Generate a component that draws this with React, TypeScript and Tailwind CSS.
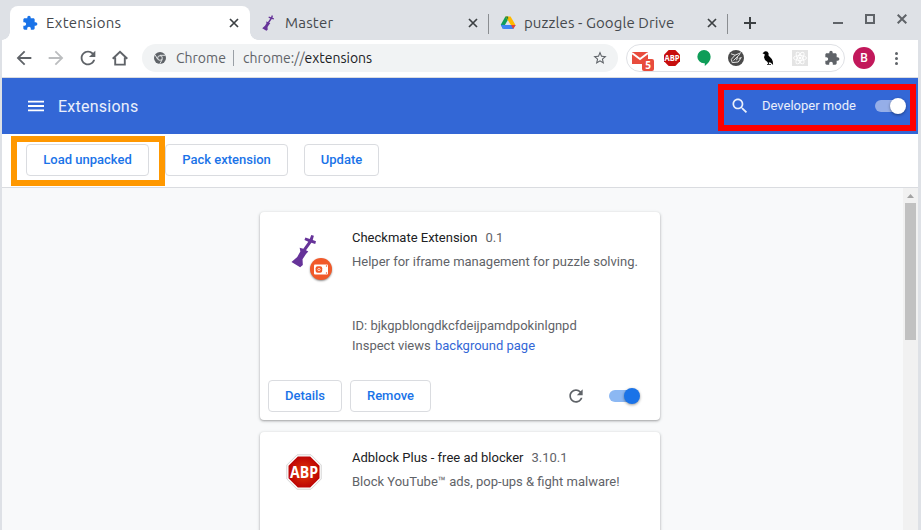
import type { ReactNode } from "react";

const UI = "font-['Ubuntu','Noto_Sans',sans-serif]";

const PATHS = {
  back: "M20 11H7.83l5.59-5.59L12 4l-8 8 8 8 1.41-1.41L7.83 13H20v-2z",
  refresh:
    "M17.65 6.35C16.2 4.9 14.21 4 12 4c-4.42 0-7.99 3.58-7.99 8s3.57 8 7.99 8c3.73 0 6.84-2.55 7.73-6h-2.08c-.82 2.33-3.04 4-5.65 4-3.31 0-6-2.69-6-6s2.69-6 6-6c1.66 0 3.14.69 4.22 1.78L13 11h7V4l-2.35 2.35z",
  puzzle:
    "M20.5 11H19V7c0-1.1-.9-2-2-2h-4V3.5C13 2.12 11.88 1 10.5 1S8 2.12 8 3.5V5H4c-1.1 0-1.99.9-1.99 2v3.8H3.5c1.49 0 2.7 1.21 2.7 2.7s-1.21 2.7-2.7 2.7H2V20c0 1.1.9 2 2 2h3.8v-1.5c0-1.49 1.21-2.7 2.7-2.7 1.49 0 2.7 1.21 2.7 2.7V22H17c1.1 0 2-.9 2-2v-4h1.5c1.38 0 2.5-1.12 2.5-2.5S21.88 11 20.5 11z",
  search:
    "M15.5 14h-.79l-.28-.27C15.41 12.59 16 11.11 16 9.5 16 5.91 13.09 3 9.5 3S3 5.91 3 9.5 5.91 16 9.5 16c1.61 0 3.09-.59 4.23-1.57l.27.28v.79l5 4.99L20.49 19l-4.99-5zm-6 0C7.01 14 5 11.99 5 9.5S7.01 5 9.5 5 14 7.01 14 9.5 11.99 14 9.5 14z",
  star: "M22 9.24l-7.19-.62L12 2 9.19 8.63 2 9.24l5.46 4.73L5.82 21 12 17.27 18.18 21l-1.63-7.03L22 9.24zM12 15.4l-3.76 2.27 1-4.28-3.32-2.88 4.38-.38L12 6.1l1.71 4.04 4.38.38-3.32 2.88 1 4.28L12 15.4z",
  menu: "M3 18h18v-2H3v2zm0-5h18v-2H3v2zm0-7v2h18V6H3z",
};

function Icon({ d, className }: { d: string; className: string }) {
  return (
    <svg viewBox="0 0 24 24" fill="currentColor" className={`shrink-0 ${className}`}>
      <path d={d} />
    </svg>
  );
}

function Cross({ className = "" }: { className?: string }) {
  return (
    <svg viewBox="0 0 8 8" className={`size-2 shrink-0 overflow-visible ${className}`} fill="none" stroke="currentColor" strokeWidth="1.7">
      <path d="M0 0l8 8M8 0L0 8" />
    </svg>
  );
}

function KingPiece({ className }: { className: string }) {
  return (
    <svg viewBox="0 0 26 34" className={`shrink-0 ${className}`} fill="#663399">
      <path d="M.5 28.400L6.500 23.200 9.700 17.500 9 13.500 12.800 14.600 18 7.300 14 5.600 15 3 19.500 4.600 21.100.3 23.800 1.200 22.600 5.600 26 6.900 25.200 9.600 21.200 8.400 15.600 16.200 18 17.500 15.600 20.200 12 25.600 12.300 31.500 9.500 34z" />
    </svg>
  );
}

function DriveLogo() {
  return (
    <svg viewBox="0 0 16 16" className="size-4 shrink-0">
      <path d="M5.4 1.5L.8 9.7l2.1 3.8L8.1 4.5z" fill="#0f9d58" />
      <path d="M5.4 1.5h5.2l5 8.7h-4.500z" fill="#ffba00" />
      <path d="M4.8 10.1h10.8l-2.4 4H2.8z" fill="#3c83f6" />
      <path d="M11.1 10.1h4.500l-2.400 4z" fill="#ea4335" />
      <path d="M.8 9.7l2 4.4 2.4-4z" fill="#3c83f6" />
      <path d="M5.4 1.5h2.700v3z" fill="#188038" />
    </svg>
  );
}

function ChromeMark() {
  return (
    <svg viewBox="0 0 12 12" className="size-3 shrink-0">
      <circle cx="6" cy="6" r="6" fill="#5f6368" />
      <circle cx="6" cy="6" r="2.3" fill="#5f6368" stroke="#f1f3f4" strokeWidth="0.9" />
      <path d="M6 3.3h5.4M3.7 7.3L1.1 2.9M8.3 7.4L5.8 11.8" stroke="#f1f3f4" strokeWidth="0.9" />
    </svg>
  );
}

function Tab({ icon, title, spacing, active, className }: { icon: ReactNode; title: string; spacing: string; active?: boolean; className: string }) {
  return (
    <div className={`relative flex h-[34px] shrink-0 items-center ${active ? "rounded-t-lg bg-white" : ""} ${className}`}>
      {active && (
        <>
          <i className="absolute bottom-0 -left-2 size-2 bg-[radial-gradient(circle_at_0_0,transparent_7.5px,#fff_8px)]" />
          <i className="absolute bottom-0 -right-2 size-2 bg-[radial-gradient(circle_at_100%_0,transparent_7.5px,#fff_8px)]" />
        </>
      )}
      <span className="flex w-[24px] shrink-0">{icon}</span>
      <span className={`text-[15px] leading-5 whitespace-nowrap text-[#45494d] ${spacing}`}>{title}</span>
      <Cross className="ml-auto text-[#3c4043]" />
    </div>
  );
}

function Button({ children, className }: { children: ReactNode; className: string }) {
  return (
    <button className={`h-8 shrink-0 rounded-[4px] border border-[#dadce0] bg-white pb-[2px] text-[13px] leading-[15px] font-medium whitespace-nowrap text-[#1a73e8] ${className}`}>
      {children}
    </button>
  );
}

function Toggle({ track, knob }: { track: string; knob: string }) {
  return (
    <span className="flex h-4 w-[31px] shrink-0 items-center">
      <span className={`flex h-3 w-7 items-center rounded-full ${track}`}>
        <span className={`ml-[15px] size-4 shrink-0 rounded-full shadow-[0_1px_3px_rgba(0,0,0,0.4)] ${knob}`} />
      </span>
    </span>
  );
}

function TabStrip() {
  return (
    <div className={`flex h-10 pt-1.5 pl-2 ${UI}`}>
      <Tab active className="w-[240px] pr-3 pl-3" spacing="tracking-[0.250px]" title="Extensions" icon={<Icon d={PATHS.puzzle} className="size-4 text-[#1a73e8]" />} />
      <Tab className="w-[238px] pr-[11px] pl-[11px]" spacing="tracking-[0.200px]" title="Master" icon={<KingPiece className="ml-[1px] h-4 w-3" />} />
      <i className="mt-2 h-5 w-px bg-[#8a8d91]" />
      <Tab className="w-[238px] pr-[11px] pl-[11px]" spacing="tracking-[0.090px]" title="puzzles - Google Drive" icon={<DriveLogo />} />
      <i className="mt-2 h-5 w-px bg-[#8a8d91]" />
      <svg viewBox="0 0 12 12" className="mt-[11px] ml-4 size-3 shrink-0" stroke="#3c4043" strokeWidth="2">
        <path d="M6 0v12M0 6h12" />
      </svg>
      <div className="mt-2 ml-auto flex h-[10px] w-[85px] shrink-0 text-[#5f6368]">
        <i className="mt-2 h-0.5 w-[10px] bg-[#5f6368]" />
        <i className="ml-[22px] size-[10px] border-2 border-[#5f6368]" />
        <svg viewBox="0 0 10 10" className="ml-[22px] size-[10px]" stroke="currentColor" strokeWidth="2">
          <path d="M.7.7l8.6 8.6M9.3.7L.7 9.3" />
        </svg>
      </div>
    </div>
  );
}

function ExtensionIcons() {
  return (
    <div className="ml-2 flex h-7 w-[219px] shrink-0 items-center gap-4 rounded-full border border-[#dfe1e5] pl-[5px]">
      <span className="relative size-4 shrink-0">
        <svg viewBox="0 0 16 16" className="size-4">
          <path d="M0 2h16v12H0z" fill="#e84c3d" />
          <path d="M0 3l8 6 8-6" stroke="#fff" strokeWidth="1.8" fill="none" />
        </svg>
        <b className="absolute top-[9px] left-[10px] flex h-3 w-3 items-center justify-center rounded-[2px] bg-[#e84c3d] font-['Open_Sans',sans-serif] text-[10px] leading-none text-white">5</b>
      </span>
      <svg viewBox="0 0 16 16" className="size-4 shrink-0">
        <path d="M4.7 0h6.6L16 4.7v6.6L11.3 16H4.7L0 11.3V4.7z" fill="#c70d0d" />
        <text x="8" y="10.800" textAnchor="middle" textLength="15" lengthAdjust="spacingAndGlyphs" fontSize="8" fontWeight="700" fontFamily="Open Sans" fill="#fff">ABP</text>
      </svg>
      <svg viewBox="0 0 16 16" className="size-4 shrink-0" fill="#0f9d58">
        <path d="M8 0a6.600 6.600 0 0 1 6.600 6.800c0 3.800-2.600 7-5.800 9.200V13.300H8A6.650 6.650 0 0 1 8 0z" />
      </svg>
      <svg viewBox="0 0 16 16" className="size-4 shrink-0" fill="none" stroke="#e4e4e4">
        <circle cx="8" cy="8" r="8" fill="#4a4a4a" stroke="none" />
        <path d="M3 3.800L7 5.200 3.300 9.300 4.200 12.600 10.200 12 13.300 7.500 10.800 8.500M7 5.200L13 2.700M5.500 10.500L12 4.200M8.600 10.200L9.500 6.800" strokeWidth="1" />
      </svg>
      <svg viewBox="0 0 16 16" className="size-4 shrink-0" fill="#050505">
        <path d="M2.500 3.200L5 1.200 7.200 1.500 8.600 3.200 8.500 5.500 11.800 9l1 2.600.3 3.300L10.800 12.700 8.800 12.300 9 14h2v.8H7v-.8h1.200L7.500 12 5 10 4 7.200 4.900 4.400z" />
      </svg>
      <svg viewBox="0 0 16 16" className="size-4 shrink-0" fill="none" stroke="#fff" strokeWidth="0.9">
        <path d="M0 0h16v16H0z" fill="#e4e4e4" stroke="none" />
        <ellipse cx="8" cy="8" rx="6.500" ry="2.500" />
        <ellipse cx="8" cy="8" rx="6.500" ry="2.500" transform="rotate(60 8 8)" />
        <ellipse cx="8" cy="8" rx="6.500" ry="2.500" transform="rotate(120 8 8)" />
        <circle cx="8" cy="8" r="1" fill="#fff" />
      </svg>
      <Icon d={PATHS.puzzle} className="size-4 text-[#5f6368]" />
    </div>
  );
}

function AddressBar() {
  return (
    <div className="flex h-[37px] items-center bg-white pb-px pl-1.5 text-[#5f6368]">
      <span className="flex w-8 justify-center"><Icon d={PATHS.back} className="size-[22px]" /></span>
      <span className="flex w-8 justify-center"><Icon d={PATHS.back} className="size-[22px] rotate-180 text-[#bbbdbf]" /></span>
      <span className="flex w-8 justify-center"><Icon d={PATHS.refresh} className="size-[22px]" /></span>
      <span className="flex w-8 justify-center">
        <svg viewBox="0 0 16 16" className="size-4" fill="none" stroke="currentColor" strokeWidth="1.900">
          <path d="M.7 8.700L8 1.700l7.300 7M3.200 7.500V14.600h9.600V7.500" />
        </svg>
      </span>
      <div className={`ml-1.5 flex h-7 w-[476px] shrink-0 items-center rounded-full bg-[#f1f3f4] pr-[10px] pl-3 text-[14px] leading-5 whitespace-nowrap ${UI}`}>
        <ChromeMark />
        <span className="ml-[10px] w-[57px]">Chrome</span>
        <i className="h-4 w-px bg-[#9aa0a6]" />
        <span className="ml-[9px]">chrome://<span className="text-[#202124]">extensions</span></span>
        <Icon d={PATHS.star} className="ml-auto size-4" />
      </div>
      <ExtensionIcons />
      <span className="ml-2 flex size-[22px] shrink-0 items-center justify-center rounded-full bg-[#c2185b] text-[12px] font-medium text-white">B</span>
      <span className="ml-5 flex w-[3px] flex-col gap-[2px]">
        <i className="size-[3px] rounded-full bg-[#5f6368]" />
        <i className="size-[3px] rounded-full bg-[#5f6368]" />
        <i className="size-[3px] rounded-full bg-[#5f6368]" />
      </span>
    </div>
  );
}

function Header() {
  return (
    <header className="relative flex h-14 items-center bg-[#3367d6] pl-[22px] text-white">
      <Icon d={PATHS.menu} className="size-6 scale-[0.89]" />
      <h1 className="ml-[10px] pt-[2px] text-[16px] leading-6 tracking-[0.250px] text-white/90">Extensions</h1>
      <Icon d={PATHS.search} className="ml-auto size-5 text-white/90" />
      <span className="ml-3 w-[113px] text-[13px] leading-5 text-white/90">Developer mode</span>
      <span className="mr-3 flex"><Toggle track="bg-[#95aee8]" knob="bg-white" /></span>
      <div className="absolute top-[6px] right-[2px] h-[47px] w-[198px] border-6 border-[#f00]" />
    </header>
  );
}

function DeveloperToolbar() {
  return (
    <div className="relative flex h-[54px] border-b border-[#dadce0] bg-white pt-[10px] pl-6">
      <Button className="w-[123px]">Load unpacked</Button>
      <Button className="ml-4 w-[123px]">Pack extension</Button>
      <Button className="ml-4 w-[75px]">Update</Button>
      <div className="absolute top-[2px] left-[9px] h-[50px] w-[154px] border-6 border-[#ff9800]" />
    </div>
  );
}

function Card({ icon, name, version, description, children }: { icon: ReactNode; name: string; version: string; description: string; children?: ReactNode }) {
  return (
    <article className="flex h-[208px] w-[400px] shrink-0 flex-col rounded-[4px] bg-white text-[13px] leading-5 text-[#5f6368] shadow-[0_1px_2px_rgba(60,64,67,0.35),0_1px_3px_1px_rgba(60,64,67,0.12)]">
      <div className="flex h-[168px] pt-4">
        <div className="w-[92px] shrink-0 pt-[6px] pl-[26px]">{icon}</div>
        <div className="whitespace-nowrap">
          <div className="flex gap-2">
            <span className="text-[#202124]">{name}</span>
            <span>{version}</span>
          </div>
          <p className="mt-1">{description}</p>
          {children && (
            <div className="mt-11">
              <p>ID: bjkgpblongdkcfdeijpamdpokinlgnpd</p>
              <p>Inspect views <span className="ml-px text-[#3367d6]">background page</span></p>
            </div>
          )}
        </div>
      </div>
      {children}
    </article>
  );
}

function CheckmateIcon() {
  return (
    <span className="relative block h-9 w-9">
      <KingPiece className="ml-[5px] h-[34px] w-[25px]" />
      <span className="absolute top-[24px] left-[24px] flex size-[22px] items-center justify-center rounded-full bg-[#f1592a] shadow-[0_1px_2px_rgba(0,0,0,0.450)]">
        <svg viewBox="0 0 14 11" className="h-[11px] w-[14px]">
          <rect y=".5" width="14" height="10" rx="1" fill="#fff" />
          <rect x="1.600" y="2.300" width="6.600" height="6.400" rx="2" fill="#f1592a" />
          <circle cx="5" cy="5.500" r="1.200" fill="#f1592a" stroke="#fff" strokeWidth=".7" />
          <circle cx="12.500" cy="2" r=".7" fill="#f1592a" />
          <circle cx="12.500" cy="9" r=".7" fill="#f1592a" />
        </svg>
      </span>
    </span>
  );
}

function AdblockIcon() {
  return (
    <svg viewBox="0 0 36 36" className="size-9">
      <defs>
        <radialGradient id="abp">
          <stop offset="0" stopColor="#e33b08" />
          <stop offset="1" stopColor="#bd0505" />
        </radialGradient>
      </defs>
      <path d="M11 .8h14L35.200 11v14L25 35.200H11L.8 25V11z" fill="#fff" stroke="#d4d4d4" />
      <path d="M11.800 2.500h12.400l9.300 9.300v12.400l-9.300 9.300H11.800l-9.300-9.300V11.800z" fill="url(#abp)" />
      <text x="18" y="23.800" textAnchor="middle" textLength="28" lengthAdjust="spacingAndGlyphs" fontSize="15.500" fontWeight="700" fontFamily="Open Sans" fill="#fff">ABP</text>
    </svg>
  );
}

export default function App() {
  return (
    <div className="flex h-[530px] w-[921px] flex-col overflow-hidden bg-[#dee1e6] pr-[3px] pl-0.5 font-['Roboto',sans-serif]">
      <TabStrip />
      <AddressBar />
      <div className="h-px shrink-0 bg-[#dadce0]" />
      <Header />
      <DeveloperToolbar />
      <main className="flex h-[342px] overflow-hidden bg-[#f8f9fa] pl-[258px]">
        <div className="flex flex-col gap-3 pt-6">
          <Card icon={<CheckmateIcon />} name="Checkmate Extension" version="0.1" description="Helper for iframe management for puzzle solving.">
            <div className="flex items-center px-2">
              <Button className="w-[74px]">Details</Button>
              <Button className="ml-2 w-[81px]">Remove</Button>
              <Icon d={PATHS.refresh} className="ml-auto size-5" />
              <span className="mr-[12px] ml-[23px] flex"><Toggle track="bg-[#8cb8f3]" knob="bg-[#1a73e8]" /></span>
            </div>
          </Card>
          <Card icon={<AdblockIcon />} name="Adblock Plus - free ad blocker" version="3.10.1" description="Block YouTube™ ads, pop-ups & fight malware!" />
        </div>
        <div className="ml-auto flex w-[15px] flex-col items-center bg-[#f1f1f1]">
          <svg viewBox="0 0 15 15" className="size-[15px]" fill="#a3a3a3">
            <path d="M7.500 6l3.500 4H4z" />
          </svg>
          <div className="h-[137px] w-[11px] bg-[#c1c1c1]" />
        </div>
      </main>
    </div>
  );
}
